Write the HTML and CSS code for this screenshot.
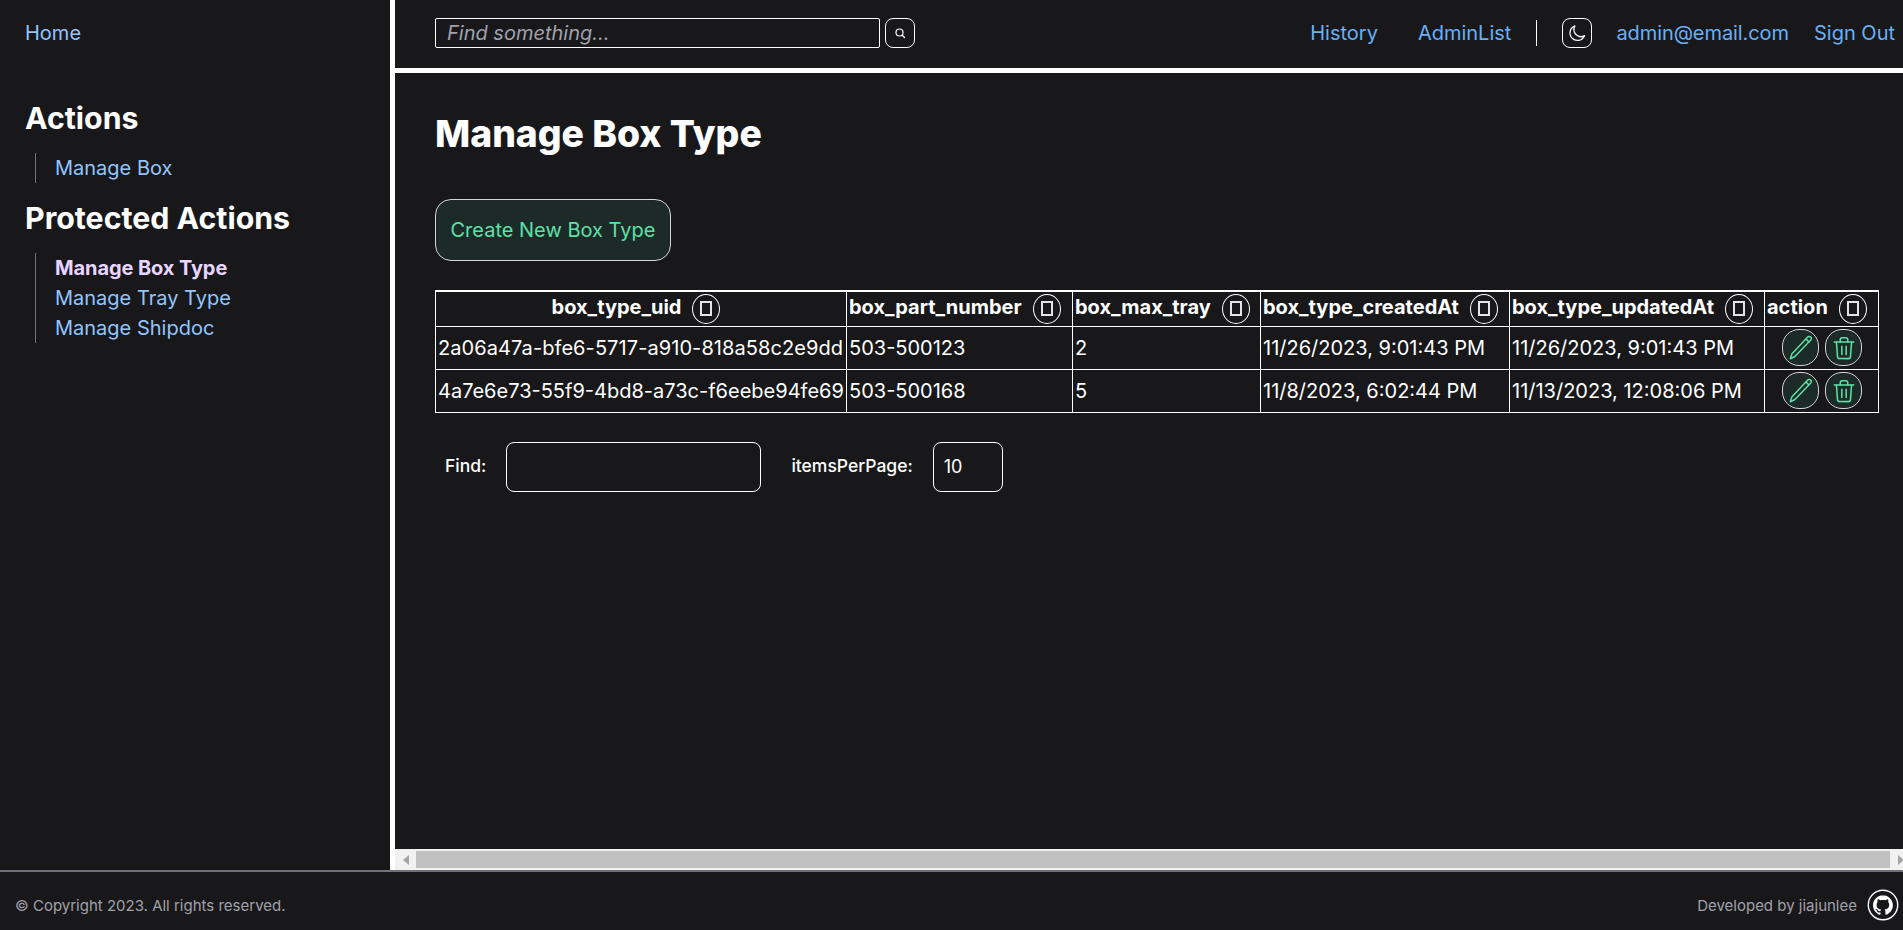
FILE: index.html
```html
<!DOCTYPE html>
<html lang="en">
<head>
<meta charset="utf-8">
<title>Manage Box Type</title>
<link rel="stylesheet" href="styles.css">
</head>
<body>
<div class="app">
  <aside class="sidebar">
    <a class="link home" href="#">Home</a>
    <h2 class="side-title first">Actions</h2>
    <ul class="side-list">
      <li><a class="link" href="#">Manage Box</a></li>
    </ul>
    <h2 class="side-title">Protected Actions</h2>
    <ul class="side-list">
      <li><a class="link active" href="#">Manage Box Type</a></li>
      <li><a class="link" href="#">Manage Tray Type</a></li>
      <li><a class="link" href="#">Manage Shipdoc</a></li>
    </ul>
  </aside>
  <div class="right">
    <header class="topbar">
      <div class="search">
        <input class="search-input" type="text" placeholder="Find something...">
        <button class="search-btn" aria-label="Search">
          <svg viewBox="0 0 24 24" width="12" height="12" fill="none" stroke="#fff" stroke-width="2.4" stroke-linecap="round"><circle cx="11" cy="11" r="7"/><path d="M16.5 16.5 21 21"/></svg>
        </button>
      </div>
      <nav class="topnav">
        <a class="link" href="#">History</a>
        <a class="link adminlist" href="#">AdminList</a>
        <span class="divider"></span>
        <button class="theme-btn" aria-label="Theme">
          <svg viewBox="0 0 24 24" width="20" height="20" fill="none" stroke="#fff" stroke-width="1.5" stroke-linecap="round" stroke-linejoin="round"><path d="M9.5 3.5A9 9 0 1 0 21 15.2 A8.5 8.5 0 0 1 9.5 3.5Z"/></svg>
        </button>
        <a class="link email" href="#">admin@email.com</a>
        <a class="link signout" href="#">Sign Out</a>
      </nav>
    </header>
    <main class="main">
      <h1 class="page-title">Manage Box Type</h1>
      <button class="create-btn">Create New Box Type</button>
      <table class="data">
        <colgroup>
          <col class="c1"><col class="c2"><col class="c3"><col class="c4"><col class="c5"><col class="c6">
        </colgroup>
        <thead>
          <tr>
            <th class="center">box_type_uid<span class="sort"><i></i></span></th>
            <th>box_part_number<span class="sort"><i></i></span></th>
            <th>box_max_tray<span class="sort"><i></i></span></th>
            <th>box_type_createdAt<span class="sort"><i></i></span></th>
            <th>box_type_updatedAt<span class="sort"><i></i></span></th>
            <th>action<span class="sort"><i></i></span></th>
          </tr>
        </thead>
        <tbody>
          <tr>
            <td class="uid-wide">2a06a47a-bfe6-5717-a910-818a58c2e9dd</td>
            <td>503-500123</td>
            <td>2</td>
            <td>11/26/2023, 9:01:43 PM</td>
            <td>11/26/2023, 9:01:43 PM</td>
            <td class="actions">
              <button class="act" aria-label="Edit"><svg viewBox="0 0 24 24" width="27" height="27" fill="none" stroke="#5ee0a8" stroke-width="1.300" stroke-linecap="round" stroke-linejoin="round"><path d="M18.2 2.800a1.900 1.900 0 0 1 2.900 2.500L7 20 3 22l1.300-4.300Z"/><path d="M16.800 4.400l2.700 2.600"/></svg></button><button class="act" aria-label="Delete"><svg viewBox="0 0 24 24" width="26" height="26" fill="none" stroke="#5ee0a8" stroke-width="1.400" stroke-linecap="round" stroke-linejoin="round"><path d="M3 6.500h18"/><path d="M8.500 6.500V4.500a2 2 0 0 1 2-2h3a2 2 0 0 1 2 2v2"/><path d="M5 6.500 6 20a2 2 0 0 0 2 1.800h8a2 2 0 0 0 2-1.800l1-13.500"/><path d="M10 10.500v7.500M14 10.500v7.500"/></svg></button>
            </td>
          </tr>
          <tr>
            <td>4a7e6e73-55f9-4bd8-a73c-f6eebe94fe69</td>
            <td>503-500168</td>
            <td>5</td>
            <td>11/8/2023, 6:02:44 PM</td>
            <td>11/13/2023, 12:08:06 PM</td>
            <td class="actions">
              <button class="act" aria-label="Edit"><svg viewBox="0 0 24 24" width="27" height="27" fill="none" stroke="#5ee0a8" stroke-width="1.300" stroke-linecap="round" stroke-linejoin="round"><path d="M18.2 2.800a1.900 1.900 0 0 1 2.900 2.500L7 20 3 22l1.300-4.300Z"/><path d="M16.800 4.400l2.700 2.600"/></svg></button><button class="act" aria-label="Delete"><svg viewBox="0 0 24 24" width="26" height="26" fill="none" stroke="#5ee0a8" stroke-width="1.400" stroke-linecap="round" stroke-linejoin="round"><path d="M3 6.500h18"/><path d="M8.500 6.500V4.500a2 2 0 0 1 2-2h3a2 2 0 0 1 2 2v2"/><path d="M5 6.500 6 20a2 2 0 0 0 2 1.800h8a2 2 0 0 0 2-1.800l1-13.500"/><path d="M10 10.500v7.500M14 10.500v7.500"/></svg></button>
            </td>
          </tr>
        </tbody>
      </table>
      <div class="filters">
        <label class="f-label">Find:</label>
        <input class="f-input find" type="text">
        <label class="f-label per">itemsPerPage:</label>
        <input class="f-input num" type="text" value="10">
      </div>
    </main>
    <div class="hscroll">
      <span class="arrow-left"></span>
      <span class="thumb"></span>
      <span class="arrow-right"></span>
    </div>
  </div>
</div>
<footer class="footer">
  <span>© Copyright 2023. All rights reserved.</span>
  <div class="dev">
    <span>Developed by jiajunlee</span>
    <svg class="gh" viewBox="0 0 32 32" width="32" height="32"><circle cx="16" cy="16" r="14.7" fill="none" stroke="#fff" stroke-width="1.4"/><path fill="#fff" d="M16 6.200c-5.500 0-10 4.500-10 10 0 4.400 2.900 8.200 6.800 9.500.5.100.7-.2.7-.5v-1.700c-2.800.6-3.400-1.300-3.400-1.300-.5-1.200-1.100-1.500-1.100-1.500-.9-.6.100-.6.100-.6 1 .1 1.500 1 1.500 1 .9 1.500 2.300 1.100 2.900.8.100-.6.3-1.100.6-1.300-2.200-.3-4.500-1.100-4.500-5 0-1.100.4-2 1-2.700-.1-.3-.4-1.300.1-2.700 0 0 .8-.3 2.700 1 .8-.2 1.600-.3 2.500-.3s1.700.1 2.500.3c1.900-1.300 2.700-1 2.700-1 .5 1.400.2 2.400.1 2.700.6.7 1 1.600 1 2.700 0 3.900-2.300 4.700-4.500 5 .4.300.7.900.7 1.900v2.700c0 .3.2.6.7.5 4-1.300 6.800-5.100 6.800-9.500 0-5.500-4.500-10-10-10z"/></svg>
  </div>
</footer>
</body>
</html>
```
FILE: styles.css
```css
* { box-sizing: border-box; }
html, body { margin: 0; height: 100%; overflow: hidden; }
body {
  background: #18181b;
  color: #fff;
  font-family: Inter, "Liberation Sans", sans-serif;
  font-size: 20px;
  display: flex;
  flex-direction: column;
  height: 930px;
}
.link { color: #93c5fd; text-decoration: none; }
.app { display: flex; height: 870px; }
.sidebar {
  width: 395px;
  flex: none;
  border-right: 5px solid #fff;
  padding: 21px 25px 0;
}
.home { display: block; line-height: 24px; }
.side-title {
  font-size: 30.3px;
  font-weight: 700;
  line-height: 36px;
  margin: 0 0 17px;
}
.side-title.first { margin-top: 55px; }
.side-list {
  list-style: none;
  margin: 0 0 17px 10px;
  padding: 0 0 0 19px;
  border-left: 1px solid #71717a;
}
.side-list li { line-height: 30px; }
.active { color: #e9d5ff; font-weight: 700; letter-spacing: -0.1px; }
.right { flex: 1; min-width: 0; display: flex; flex-direction: column; }
.topbar {
  height: 73px;
  flex: none;
  border-bottom: 5px solid #fff;
  display: flex;
  align-items: center;
  justify-content: space-between;
  padding: 0 8px 2px 40px;
}
.search { display: flex; align-items: center; gap: 5px; }
.search-input {
  width: 445px;
  height: 30px;
  background: transparent;
  border: 1px solid #fff;
  border-radius: 2px;
  color: #fff;
  font: italic 20px Inter, sans-serif;
  padding: 0 11px;
}
.search-input::placeholder { color: #a1a1aa; opacity: 1; }
.search-btn {
  width: 30px;
  height: 30px;
  background: transparent;
  border: 1px solid #fff;
  border-radius: 8px;
  padding: 0;
  display: flex;
  align-items: center;
  justify-content: center;
}
.topnav { display: flex; align-items: center; }
.topnav .link { color: #68b0f5; }
.adminlist { margin-left: 40px; }
.divider { width: 1px; height: 26px; background: #fff; margin: 0 25px; }
.theme-btn {
  width: 30px;
  height: 30px;
  background: transparent;
  border: 1px solid #fff;
  border-radius: 8px;
  padding: 0;
  display: flex;
  align-items: center;
  justify-content: center;
  margin-right: 24px;
}
.email { letter-spacing: -0.08px; }
.signout { margin-left: 25px; }
.main { flex: 1; min-height: 0; padding: 41px 0 0 40px; }
.page-title {
  font-size: 37.3px;
  font-weight: 800;
  line-height: 40px;
  margin: 0 0 45px;
}
.create-btn {
  display: block;
  height: 62px;
  padding: 0 14.5px;
  background: #1d2b28;
  border: 1px solid #d4d4d8;
  border-radius: 16px;
  color: #5ee0a8;
  font: 20px Inter, sans-serif;
  margin-bottom: 29px;
}
.data {
  table-layout: fixed;
  width: 1443px;
  border-collapse: collapse;
  border: 1px solid #fff;
  border-top-width: 2px;
  white-space: nowrap;
}
.c1 { width: 411px; }
.c2 { width: 226px; }
.c3 { width: 188px; }
.c4 { width: 249px; }
.c5 { width: 255px; }
.c6 { width: 114px; }
.data th, .data td { border: 1px solid #fff; padding: 0 1px 0 2px; text-align: left; font-size: 20px; }
.data th { font-weight: 700; height: 35px; line-height: 1; }
.data td { height: 43px; font-weight: 400; }
.data th.center { text-align: center; }
.data td:first-child { padding-left: 2px; }
.data .uid-wide { letter-spacing: 0.08px; }
.sort {
  display: inline-flex;
  align-items: center;
  justify-content: center;
  width: 28px;
  height: 30px;
  border: 1px solid #fff;
  border-radius: 50%;
  margin: 0 0 0 11px;
  vertical-align: middle;
}
.center .sort { margin-right: 11px; }
.sort i { display: block; width: 12px; height: 15px; border: 2px solid #e4e4e7; }
.data .actions { text-align: center; }
.act {
  width: 37px;
  height: 37px;
  background: #1d2b28;
  border: 1px solid #d4d4d8;
  border-radius: 17px;
  padding: 0;
  margin: 0 3px;
  vertical-align: middle;
  display: inline-flex;
  align-items: center;
  justify-content: center;
}
.filters { display: flex; align-items: center; margin-top: 29px; padding-left: 10px; }
.f-label { font-size: 17.5px; font-weight: 500; margin-bottom: 3px; }
.f-input {
  height: 50px;
  background: transparent;
  border: 1px solid #fff;
  border-radius: 8px;
  color: #fff;
  font: 18px Inter, sans-serif;
  padding: 0 10px;
}
.find { width: 255px; margin: 0 30px 0 20px; }
.num { width: 70px; margin-left: 20px; }
.hscroll { height: 21px; flex: none; background: #f1f1f1; display: flex; align-items: center; margin-right: -8px; }
.arrow-left, .arrow-right { width: 21px; flex: none; display: flex; justify-content: center; }
.arrow-left::before { content: ""; border: 5px solid transparent; border-left: 0; border-right: 6px solid #a3a3a3; }
.arrow-right::before { content: ""; border: 5px solid transparent; border-right: 0; border-left: 6px solid #a3a3a3; }
.thumb { flex: 1; height: 17px; background: #c1c1c1; }
.footer {
  height: 60px;
  flex: none;
  border-top: 2px solid #71717a;
  display: flex;
  align-items: center;
  justify-content: space-between;
  padding: 8px 4px 0 15px;
  font-size: 15px;
  color: #a1a1aa;
}
.dev { display: flex; align-items: center; gap: 10px; }
.gh { display: block; }
```
